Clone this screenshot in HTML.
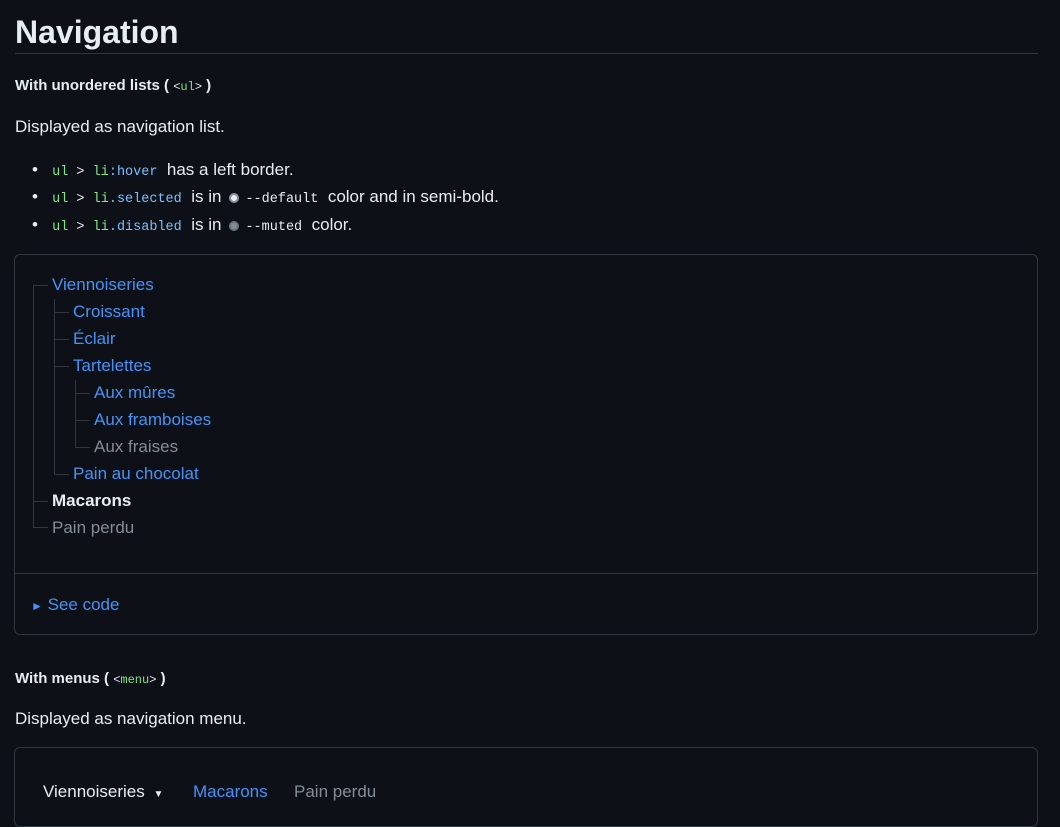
<!DOCTYPE html>
<html><head><meta charset="utf-8"><style>
*{margin:0;padding:0;box-sizing:border-box}
body{width:1060px;height:800px;overflow:hidden;background:#0d1117;color:#e6edf3;font-family:"Liberation Sans",sans-serif;font-size:17px;position:relative}
.a{position:absolute;white-space:nowrap}
code{font-family:"Liberation Mono",monospace;font-size:13.5px}
.g{color:#7ee787}.b{color:#79c0ff}
.blue{color:#4493f8}.mut{color:#848d97}
.box{position:absolute;border:1px solid #30363d;border-radius:6px}
.l{position:absolute;background:#30363d}
.t{position:absolute;line-height:20px;white-space:nowrap}
.dot{display:inline-block;width:10px;height:10px;border-radius:50%;vertical-align:-1px;margin:0 6px 0 8px}
</style></head><body>
<div class="a" style="left:15px;top:12px;font-size:32px;font-weight:bold;line-height:40px">Navigation</div>
<div class="l" style="left:15px;top:53px;width:1023px;height:1px"></div>
<div class="a" style="left:15px;top:77px;font-size:15px;font-weight:bold">With unordered lists ( <code style="font-weight:normal;font-size:12px">&lt;<span class="g">ul</span>&gt;</code> )</div>
<div class="a" style="left:15px;top:117px">Displayed as navigation list.</div>
<div class="t" style="left:32px;top:160px">•&nbsp;&nbsp; <code><span class="g">ul</span> &gt; <span class="g">li</span><span class="b">:hover</span></code>&nbsp; has a left border.</div>
<div class="t" style="left:32px;top:187px">•&nbsp;&nbsp; <code><span class="g">ul</span> &gt; <span class="g">li</span><span class="b">.selected</span></code>&nbsp; is in<span class="dot" style="background:#e6edf3;border:2px solid #8b949e"></span><code>--default</code>&nbsp; color and in semi-bold.</div>
<div class="t" style="left:32px;top:215px">•&nbsp;&nbsp; <code><span class="g">ul</span> &gt; <span class="g">li</span><span class="b">.disabled</span></code>&nbsp; is in<span class="dot" style="background:#848d97;border:2px solid #6e7681"></span><code>--muted</code>&nbsp; color.</div>
<div class="box" style="left:14px;top:254px;width:1024px;height:381px"></div>
<div class="l" style="left:15px;top:573px;width:1022px;height:1px"></div>
<div class="l" style="left:33px;top:285px;width:1px;height:243px"></div>
<div class="l" style="left:33px;top:285px;width:15px;height:1px"></div>
<div class="l" style="left:33px;top:501px;width:15px;height:1px"></div>
<div class="l" style="left:33px;top:527px;width:15px;height:1px"></div>
<div class="l" style="left:54px;top:299px;width:1px;height:175px"></div>
<div class="l" style="left:54px;top:312px;width:15px;height:1px"></div>
<div class="l" style="left:54px;top:339px;width:15px;height:1px"></div>
<div class="l" style="left:54px;top:366px;width:15px;height:1px"></div>
<div class="l" style="left:54px;top:474px;width:15px;height:1px"></div>
<div class="l" style="left:75px;top:380px;width:1px;height:67px"></div>
<div class="l" style="left:75px;top:393px;width:15px;height:1px"></div>
<div class="l" style="left:75px;top:420px;width:15px;height:1px"></div>
<div class="l" style="left:75px;top:447px;width:15px;height:1px"></div>
<div class="t blue" style="left:52px;top:275px">Viennoiseries</div>
<div class="t blue" style="left:73px;top:302px">Croissant</div>
<div class="t blue" style="left:73px;top:329px">Éclair</div>
<div class="t blue" style="left:73px;top:356px">Tartelettes</div>
<div class="t blue" style="left:94px;top:383px">Aux mûres</div>
<div class="t blue" style="left:94px;top:410px">Aux framboises</div>
<div class="t mut" style="left:94px;top:437px">Aux fraises</div>
<div class="t blue" style="left:73px;top:464px">Pain au chocolat</div>
<div class="t" style="left:52px;top:491px;font-weight:bold">Macarons</div>
<div class="t mut" style="left:52px;top:518px">Pain perdu</div>
<div class="t blue" style="left:31px;top:595px"><span style="font-size:12px">►</span> See code</div>
<div class="a" style="left:15px;top:670px;font-size:15px;font-weight:bold">With menus ( <code style="font-weight:normal;font-size:12px">&lt;<span class="g">menu</span>&gt;</code> )</div>
<div class="a" style="left:15px;top:709px">Displayed as navigation menu.</div>
<div class="box" style="left:14px;top:747px;width:1024px;height:80px"></div>
<div class="t" style="left:43px;top:782px">Viennoiseries <span style="font-size:10px;margin-left:4px">▼</span></div>
<div class="t blue" style="left:193px;top:782px">Macarons</div>
<div class="t mut" style="left:294px;top:782px">Pain perdu</div>
</body></html>
